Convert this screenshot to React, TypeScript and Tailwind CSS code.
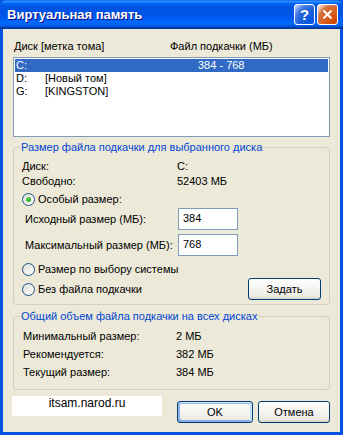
import React from "react";

const font = { fontFamily: '"Liberation Sans", Arial, sans-serif' };

const Radio: React.FC<{ checked?: boolean; label: string }> = ({ checked, label }) => (
  <div className="flex items-center h-[14px]">
    <span className="w-[13px] h-[13px] rounded-full border border-[#1c5180] bg-[linear-gradient(135deg,#dcdcd7,#ffffff)] flex items-center justify-center">
      {checked && (
        <span className="w-[5px] h-[5px] rounded-full bg-[radial-gradient(circle_at_30%_30%,#55d551,#21a121)]" />
      )}
    </span>
    <span className="ml-[3px]">{label}</span>
  </div>
);

const XpButton: React.FC<{ label: string; isDefault?: boolean; className?: string }> = ({
  label,
  isDefault,
  className,
}) => (
  <button
    className={`h-[22px] rounded-[3px] border border-[#003c74] bg-[linear-gradient(180deg,#ffffff,#ecebe6_86%,#d6d0c5)] text-[11px] text-black ${
      isDefault
        ? "shadow-[inset_-1px_1px_#cee7ff,inset_1px_2px_#98b8ea,inset_-2px_2px_#bcd4f6,inset_1px_-1px_#89ade4,inset_2px_-2px_#89ade4]"
        : ""
    } ${className ?? ""}`}
  >
    {label}
  </button>
);

const drives = [
  { letter: "C:", label: "", size: "384 - 768", selected: true },
  { letter: "D:", label: "[Новый том]", size: "", selected: false },
  { letter: "G:", label: "[KINGSTON]", size: "", selected: false },
];

export default function App() {
  return (
    <div
      className="w-[343px] h-[435px] flex flex-col bg-[#0553e3] text-[11px] leading-[13px] text-black select-none"
      style={font}
    >
      {/* title bar */}
      <div className="h-[29px] shrink-0 flex items-center pl-[7px] pr-[5px] rounded-t-[7px] bg-[linear-gradient(180deg,#0058ee_0%,#3593ff_4%,#288eff_6%,#127dff_8%,#036ffc_10%,#0262ee_14%,#0057e5_20%,#0054e3_24%,#0055eb_56%,#005bf5_66%,#026afe_76%,#0062ef_86%,#0052d6_92%,#0040ab_94%,#003092_100%)]">
        <span className="text-white font-bold text-[13px] [text-shadow:1px_1px_#0f1089]">
          Виртуальная память
        </span>
        <div className="ml-auto flex gap-[2px]">
          <div className="w-[21px] h-[21px] rounded-[3px] border border-white bg-[radial-gradient(circle_at_90%_90%,#0054e9_0%,#2263d5_55%,#4479e4_70%,#a3bbec_90%,#ffffff_100%)] flex items-center justify-center text-white font-bold text-[15px]">
            ?
          </div>
          <div className="w-[21px] h-[21px] rounded-[3px] border border-white bg-[radial-gradient(circle_at_90%_90%,#cc4600_0%,#dc6527_55%,#cd7546_70%,#ffccb2_90%,#ffffff_100%)] flex items-center justify-center">
            <svg width="11" height="11" viewBox="0 0 11 11">
              <path d="M1.5 1.5 L9.5 9.5 M9.5 1.5 L1.5 9.5" stroke="white" strokeWidth="2" />
            </svg>
          </div>
        </div>
      </div>

      {/* body */}
      <div className="flex-1 mx-[3px] mb-[3px] bg-[#ece9d8] px-[10px] pt-[11px] flex flex-col">
        <div className="flex h-[13px] pl-[1px]">
          <span className="w-[156px]">Диск [метка тома]</span>
          <span>Файл подкачки (МБ)</span>
        </div>

        <div className="mt-[4px] h-[80px] border border-[#7f9db9] bg-white p-[1px]">
          {drives.map((d) => (
            <div
              key={d.letter}
              className={`flex h-[13px] ${d.selected ? "bg-[#316ac5] text-white" : ""}`}
            >
              <span className="w-[30px] pl-[1px]">{d.letter}</span>
              <span className="w-[153px]">{d.label}</span>
              <span>{d.size}</span>
            </div>
          ))}
        </div>

        <fieldset className="mt-[4px] border border-[#d0d0bf] rounded-[3px] pl-[8px] pr-[8px] pb-[4px]">
          <legend className="ml-[-2px] px-[1px] text-[#0046d5]">
            Размер файла подкачки для выбранного диска
          </legend>
          <div className="pt-[5px]">
            <div className="flex h-[15px] items-center">
              <span className="w-[155px]">Диск:</span>
              <span>C:</span>
            </div>
            <div className="flex h-[15px] items-center">
              <span className="w-[155px]">Свободно:</span>
              <span>52403 МБ</span>
            </div>
            <div className="mt-[3px]">
              <Radio checked label="Особый размер:" />
            </div>
            <div className="mt-[2px] flex items-center h-[22px]">
              <span className="w-[156px] pl-[3px]">Исходный размер (МБ):</span>
              <div className="w-[60px] h-[22px] border border-[#7f9db9] bg-white pl-[4px] pt-[3px]">
                384
              </div>
            </div>
            <div className="mt-[4px] flex items-center h-[22px]">
              <span className="w-[156px] pl-[3px]">Максимальный размер (МБ):</span>
              <div className="w-[60px] h-[22px] border border-[#7f9db9] bg-white pl-[4px] pt-[3px]">
                768
              </div>
            </div>
            <div className="mt-[6px]">
              <Radio label="Размер по выбору системы" />
            </div>
            <div className="mt-[2px] flex items-center justify-between h-[22px]">
              <Radio label="Без файла подкачки" />
              <XpButton label="Задать" className="w-[73px]" />
            </div>
          </div>
        </fieldset>

        <fieldset className="mt-[5px] border border-[#d0d0bf] rounded-[3px] pl-[9px] pr-[8px] pb-[8px]">
          <legend className="ml-[-3px] px-[1px] text-[#0046d5]">
            Общий объем файла подкачки на всех дисках
          </legend>
          <div className="pt-[4px]">
            {[
              ["Минимальный размер:", "2 МБ"],
              ["Рекомендуется:", "382 МБ"],
              ["Текущий размер:", "384 МБ"],
            ].map(([k, v]) => (
              <div key={k} className="flex h-[18px] items-center">
                <span className="w-[153px]">{k}</span>
                <span>{v}</span>
              </div>
            ))}
          </div>
        </fieldset>

        <div className="mt-[6px] flex items-start">
          <div className="ml-[-1px] w-[150px] h-[20px] bg-white flex justify-center pt-[1px] text-[12px]">
            itsam.narod.ru
          </div>
          <div className="ml-auto mt-[5px] flex gap-[5px]">
            <XpButton label="OK" isDefault className="w-[76px]" />
            <XpButton label="Отмена" className="w-[72px]" />
          </div>
        </div>
      </div>
    </div>
  );
}
